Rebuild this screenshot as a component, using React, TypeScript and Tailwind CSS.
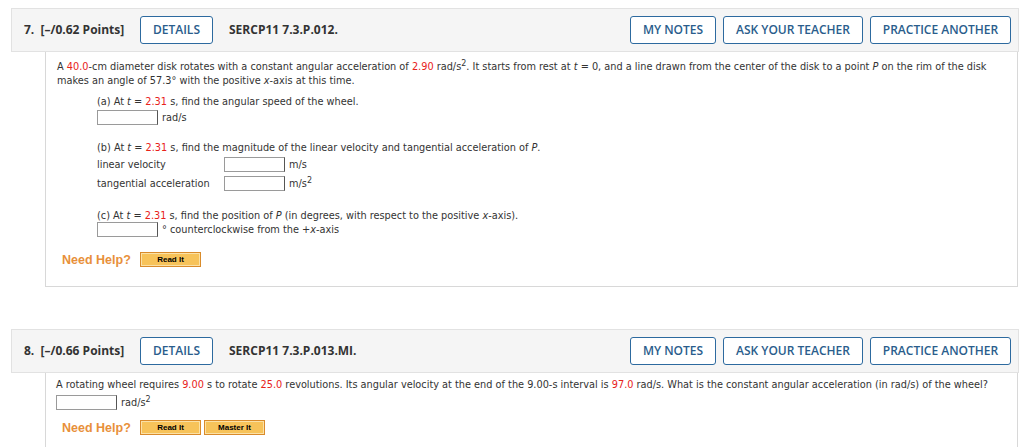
import React from 'react';

const body = { fontFamily: '"DejaVu Sans", Verdana, sans-serif' };
const head = { fontFamily: '"Open Sans", sans-serif' };
const arial = { fontFamily: '"Liberation Sans", Arial, sans-serif' };

const Red: React.FC<{ children: React.ReactNode }> = ({ children }) => (
  <span className="text-[#e8221b]">{children}</span>
);

const Sup: React.FC<{ children: React.ReactNode }> = ({ children }) => (
  <span className="relative -top-[4px] text-[8px] leading-none">{children}</span>
);

const Box: React.FC = () => (
  <span className="inline-block w-[61px] h-[15px] shrink-0 border border-[#9a9a9a] border-r-[#555] bg-white" />
);

const OutlineBtn: React.FC<{ label: string; w: string }> = ({ label, w }) => (
  <div
    className={`${w} h-[28px] flex items-center justify-center rounded-[3px] border-[1.5px] border-[#2d6a9f] bg-white text-[12px] font-semibold text-[#2a5d8c]`}
    style={head}
  >
    {label}
  </div>
);

const HelpBtn: React.FC<{ label: string }> = ({ label }) => (
  <div
    className="w-[61px] h-[15px] flex items-center justify-center bg-[#f7c35a] border border-[#d98b2b] shadow-[inset_0_0_0_1px_#fbe1a6] text-[8px] font-bold text-black"
    style={arial}
  >
    {label}
  </div>
);

const Header: React.FC<{ num: string; pts: string; code: string }> = ({ num, pts, code }) => (
  <div className="h-[44px] flex items-center bg-[#f5f5f5] border border-[#e2e2e2] pl-[12px] pr-[7px]" style={head}>
    <span className="text-[12px] font-bold text-[#333] w-[116px]">
      {num}&nbsp; [–/{pts} Points]
    </span>
    <OutlineBtn label="DETAILS" w="w-[73px]" />
    <span className="ml-[16px] text-[12px] font-bold text-[#333]">{code}</span>
    <div className="ml-auto flex gap-[7px]">
      <OutlineBtn label="MY NOTES" w="w-[86px]" />
      <OutlineBtn label="ASK YOUR TEACHER" w="w-[140px]" />
      <OutlineBtn label="PRACTICE ANOTHER" w="w-[141px]" />
    </div>
  </div>
);

const NeedHelp: React.FC<{ master?: boolean }> = ({ master }) => (
  <div className="flex items-center gap-[3px]">
    <span className="text-[12.5px] font-bold text-[#e8903a] w-[75px]" style={arial}>
      Need Help?
    </span>
    <HelpBtn label="Read It" />
    {master && <HelpBtn label="Master It" />}
  </div>
);

export default function App() {
  return (
    <div className="w-[1024px] h-[447px] bg-white overflow-hidden text-[#333]" style={body}>
      {/* Question 7 */}
      <div className="ml-[11px] mr-[5px] pt-[8px]">
        <Header num="7." pts="0.62" code="SERCP11 7.3.P.012." />
        <div className="ml-[34px] mr-[1px] border-l border-r border-b border-[#d8d8d8] pl-[11px] pr-[10px] pt-[8px] pb-[19px] text-[9.75px] leading-[14px]">
          <p>
            A <Red>40.0</Red>-cm diameter disk rotates with a constant angular acceleration of <Red>2.90</Red> rad/s
            <Sup>2</Sup>. It starts from rest at <i>t</i> = 0, and a line drawn from the center of the disk to a point{' '}
            <i>P</i> on the rim of the disk makes an angle of 57.3° with the positive <i>x</i>-axis at this time.
          </p>
          <div className="pl-[40px] mt-[7px]">
            <p>
              (a) At <i>t</i> = <Red>2.31</Red> s, find the angular speed of the wheel.
            </p>
            <div className="flex items-center gap-[4px] mt-[1px]">
              <Box />
              <span>rad/s</span>
            </div>
            <p className="mt-[16px]">
              (b) At <i>t</i> = <Red>2.31</Red> s, find the magnitude of the linear velocity and tangential acceleration
              of <i>P</i>.
            </p>
            <div className="flex items-center h-[19px]">
              <span className="w-[127px]">linear velocity</span>
              <Box />
              <span className="ml-[4px]">m/s</span>
            </div>
            <div className="flex items-center h-[19px]">
              <span className="w-[127px]">tangential acceleration</span>
              <Box />
              <span className="ml-[4px]">
                m/s<Sup>2</Sup>
              </span>
            </div>
            <p className="mt-[16px]">
              (c) At <i>t</i> = <Red>2.31</Red> s, find the position of <i>P</i> (in degrees, with respect to the
              positive <i>x</i>-axis).
            </p>
            <div className="flex items-center gap-[4px] -mt-[1px]">
              <Box />
              <span>
                ° counterclockwise from the +<i>x</i>-axis
              </span>
            </div>
          </div>
          <div className="mt-[15px] pl-[5px]">
            <NeedHelp />
          </div>
        </div>
      </div>

      {/* Question 8 */}
      <div className="ml-[11px] mr-[5px] mt-[42px]">
        <Header num="8." pts="0.66" code="SERCP11 7.3.P.013.MI." />
        <div className="ml-[34px] mr-[1px] h-[80px] border-l border-r border-[#d8d8d8] pl-[10px] pr-[10px] pt-[5px] text-[9.75px] leading-[14px]">
          <p>
            A rotating wheel requires <Red>9.00</Red> s to rotate <Red>25.0</Red> revolutions. Its angular velocity at
            the end of the 9.00-s interval is <Red>97.0</Red> rad/s. What is the constant angular acceleration (in rad/s)
            of the wheel?
          </p>
          <div className="flex items-center gap-[4px] mt-[3px]">
            <Box />
            <span>
              rad/s<Sup>2</Sup>
            </span>
          </div>
          <div className="mt-[10px] pl-[6px]">
            <NeedHelp master />
          </div>
        </div>
      </div>
    </div>
  );
}
